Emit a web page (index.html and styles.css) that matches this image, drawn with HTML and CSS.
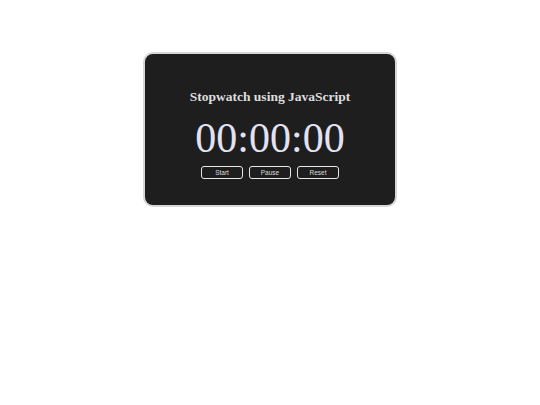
FILE: index.html
```html
<!DOCTYPE html>
<html>
<head>
<meta charset="utf-8">
<link rel="stylesheet" href="styles.css">
</head>
<body>
<div class="card">
  <h1 class="title">Stopwatch using JavaScript</h1>
  <div class="time">00:00:00</div>
  <div class="buttons">
    <button class="btn">Start</button>
    <button class="btn">Pause</button>
    <button class="btn">Reset</button>
  </div>
</div>
</body>
</html>
```
FILE: styles.css
```css
html, body {
  margin: 0;
  padding: 0;
  background: #ffffff;
}
body {
  padding-top: 52px;
  font-family: "Liberation Serif", "Times New Roman", serif;
}
.card {
  box-sizing: border-box;
  width: 254px;
  height: 155px;
  margin: 0 auto;
  background: #1e1e1e;
  border: 2px solid #d6d6d6;
  border-radius: 10px;
  display: flex;
  flex-direction: column;
  align-items: center;
  padding-top: 35px;
}
.title {
  margin: 0;
  font-size: 13.5px;
  font-weight: bold;
  color: #dedede;
  line-height: 16px;
}
.time {
  margin-top: 10px;
  font-size: 42px;
  line-height: 46px;
  color: #e2e2f4;
}
.buttons {
  margin-top: 5px;
  display: flex;
  gap: 6px;
}
.btn {
  box-sizing: border-box;
  width: 42px;
  height: 13px;
  padding: 0;
  background: transparent;
  border: 1px solid #e8e8e8;
  border-radius: 3px;
  color: #dcdcdc;
  font-family: "Liberation Sans", Arial, sans-serif;
  font-size: 6.5px;
  line-height: 11px;
}
```
